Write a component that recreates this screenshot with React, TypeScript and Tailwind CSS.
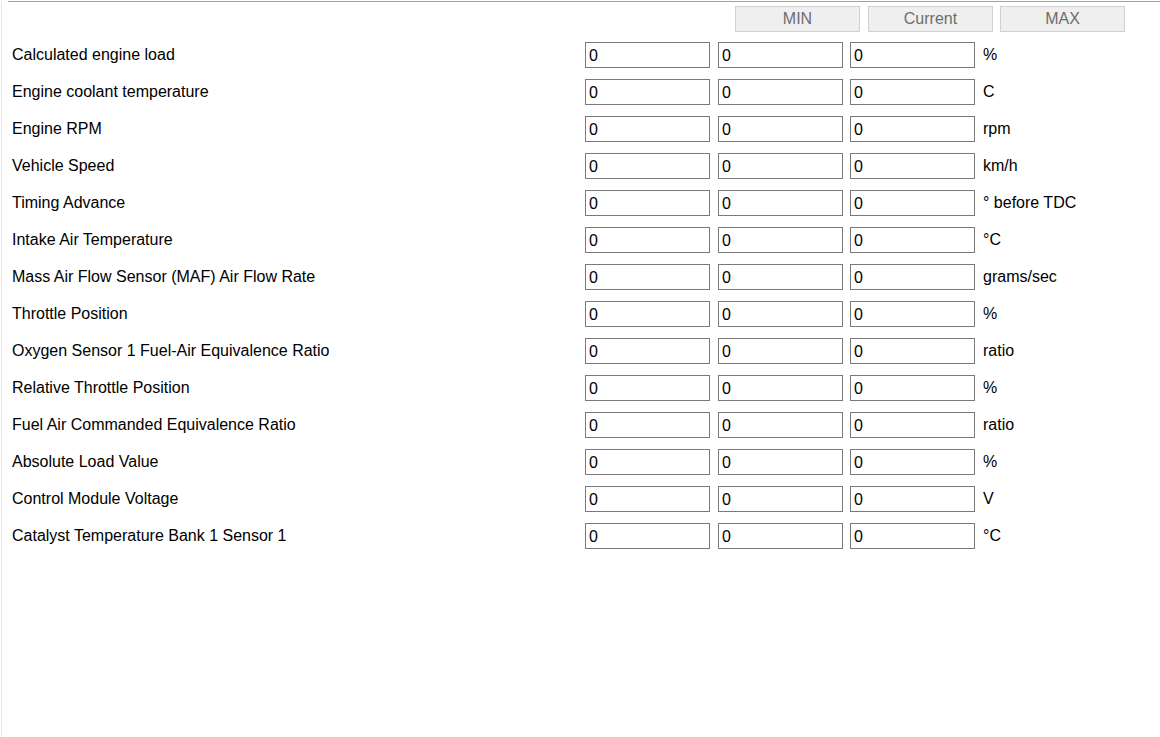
const rows: [string, string][] = [
  ['Calculated engine load', '%'],
  ['Engine coolant temperature', 'C'],
  ['Engine RPM', 'rpm'],
  ['Vehicle Speed', 'km/h'],
  ['Timing Advance', '° before TDC'],
  ['Intake Air Temperature', '°C'],
  ['Mass Air Flow Sensor (MAF) Air Flow Rate', 'grams/sec'],
  ['Throttle Position', '%'],
  ['Oxygen Sensor 1 Fuel-Air Equivalence Ratio', 'ratio'],
  ['Relative Throttle Position', '%'],
  ['Fuel Air Commanded Equivalence Ratio', 'ratio'],
  ['Absolute Load Value', '%'],
  ['Control Module Voltage', 'V'],
  ['Catalyst Temperature Bank 1 Sensor 1', '°C'],
]

function Field() {
  return (
    <input
      className="h-[26px] w-[125px] border border-[#7a7a7a] bg-white px-[3px] pt-px text-[16px] text-black outline-none"
      defaultValue="0"
      readOnly
    />
  )
}

function HeadButton({ label }: { label: string }) {
  return (
    <button
      className="h-[26px] w-[125px] border border-[#d0d0d0] bg-[#efefef] text-[16px] text-[#6d6d6d]"
      type="button"
    >
      {label}
    </button>
  )
}

export default function App() {
  return (
    <div
      className="h-[737px] w-[1160px] overflow-hidden bg-white pl-px"
      style={{ fontFamily: 'Tahoma, "Liberation Sans", Arial, sans-serif' }}
    >
      <div className="h-full border-l border-[#e6e6e6]">
        <div className="ml-[6px] mt-px h-px bg-[#a0a0a0]" />
        <div className="mt-[4px] flex pl-[733px]">
          <HeadButton label="MIN" />
          <div className="ml-[8px]">
            <HeadButton label="Current" />
          </div>
          <div className="ml-[7px]">
            <HeadButton label="MAX" />
          </div>
        </div>
        <div className="mt-[10px] flex flex-col gap-[11px]">
          {rows.map(([label, unit]) => (
            <div key={label} className="flex h-[26px] items-center">
              <div className="w-[583px] pl-[10px] text-[16px] text-black">{label}</div>
              <Field />
              <div className="ml-[8px]">
                <Field />
              </div>
              <div className="ml-[7px]">
                <Field />
              </div>
              <div className="ml-[8px] text-[16px] text-black">{unit}</div>
            </div>
          ))}
        </div>
      </div>
    </div>
  )
}
